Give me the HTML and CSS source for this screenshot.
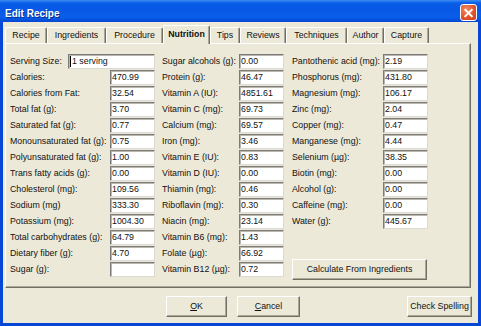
FILE: index.html
```html
<!DOCTYPE html>
<html>
<head>
<meta charset="utf-8">
<title>Edit Recipe</title>
<link rel="stylesheet" href="styles.css">
</head>
<body>
<div class="window">
  <div class="titlebar">
    <span class="title">Edit Recipe</span>
    <span class="close">
      <svg width="16" height="16" viewBox="0 0 16 16"><path d="M4.5 4.5 L11.5 11.5 M11.5 4.5 L4.5 11.5" stroke="#fff" stroke-width="2" stroke-linecap="square"/></svg>
    </span>
  </div>
  <div class="client">
    <div class="tabs">
      <div class="tab w-recipe">Recipe</div>
      <div class="tab w-ingr">Ingredients</div>
      <div class="tab w-proc">Procedure</div>
      <div class="tab w-nutr selected">Nutrition</div>
      <div class="tab w-tips">Tips</div>
      <div class="tab w-rev">Reviews</div>
      <div class="tab w-tech">Techniques</div>
      <div class="tab w-auth">Author</div>
      <div class="tab w-cap">Capture</div>
    </div>
    <div class="panel">
      <div class="col col1">
        <div class="row"><span class="label">Serving Size:</span><span class="field wide"><span class="caret"></span>1 serving</span></div>
        <div class="row"><span class="label">Calories:</span><span class="field">470.99</span></div>
        <div class="row"><span class="label">Calories from Fat:</span><span class="field">32.54</span></div>
        <div class="row"><span class="label">Total fat (g):</span><span class="field">3.70</span></div>
        <div class="row"><span class="label">Saturated fat (g):</span><span class="field">0.77</span></div>
        <div class="row"><span class="label">Monounsaturated fat (g):</span><span class="field">0.75</span></div>
        <div class="row"><span class="label">Polyunsaturated fat (g):</span><span class="field">1.00</span></div>
        <div class="row"><span class="label">Trans fatty acids (g):</span><span class="field">0.00</span></div>
        <div class="row"><span class="label">Cholesterol (mg):</span><span class="field">109.56</span></div>
        <div class="row"><span class="label">Sodium (mg)</span><span class="field">333.30</span></div>
        <div class="row"><span class="label">Potassium (mg):</span><span class="field">1004.30</span></div>
        <div class="row"><span class="label">Total carbohydrates (g):</span><span class="field">64.79</span></div>
        <div class="row"><span class="label">Dietary fiber (g):</span><span class="field">4.70</span></div>
        <div class="row"><span class="label">Sugar (g):</span><span class="field"></span></div>
      </div>
      <div class="col col2">
        <div class="row"><span class="label">Sugar alcohols (g):</span><span class="field">0.00</span></div>
        <div class="row"><span class="label">Protein (g):</span><span class="field">46.47</span></div>
        <div class="row"><span class="label">Vitamin A (IU):</span><span class="field">4851.61</span></div>
        <div class="row"><span class="label">Vitamin C (mg):</span><span class="field">69.73</span></div>
        <div class="row"><span class="label">Calcium (mg):</span><span class="field">69.57</span></div>
        <div class="row"><span class="label">Iron (mg):</span><span class="field">3.46</span></div>
        <div class="row"><span class="label">Vitamin E (IU):</span><span class="field">0.83</span></div>
        <div class="row"><span class="label">Vitamin D (IU):</span><span class="field">0.00</span></div>
        <div class="row"><span class="label">Thiamin (mg):</span><span class="field">0.46</span></div>
        <div class="row"><span class="label">Riboflavin (mg):</span><span class="field">0.30</span></div>
        <div class="row"><span class="label">Niacin (mg):</span><span class="field">23.14</span></div>
        <div class="row"><span class="label">Vitamin B6 (mg):</span><span class="field">1.43</span></div>
        <div class="row"><span class="label">Folate (µg):</span><span class="field">66.92</span></div>
        <div class="row"><span class="label">Vitamin B12 (µg):</span><span class="field">0.72</span></div>
      </div>
      <div class="col col3">
        <div class="row"><span class="label">Pantothenic acid (mg):</span><span class="field">2.19</span></div>
        <div class="row"><span class="label">Phosphorus (mg):</span><span class="field">431.80</span></div>
        <div class="row"><span class="label">Magnesium (mg):</span><span class="field">106.17</span></div>
        <div class="row"><span class="label">Zinc (mg):</span><span class="field">2.04</span></div>
        <div class="row"><span class="label">Copper (mg):</span><span class="field">0.47</span></div>
        <div class="row"><span class="label">Manganese (mg):</span><span class="field">4.44</span></div>
        <div class="row"><span class="label">Selenium (µg):</span><span class="field">38.35</span></div>
        <div class="row"><span class="label">Biotin (mg):</span><span class="field">0.00</span></div>
        <div class="row"><span class="label">Alcohol (g):</span><span class="field">0.00</span></div>
        <div class="row"><span class="label">Caffeine (mg):</span><span class="field">0.00</span></div>
        <div class="row"><span class="label">Water (g):</span><span class="field">445.67</span></div>
        <div class="button calc">Calculate From Ingredients</div>
      </div>
    </div>
    <div class="footer">
      <div class="button ok"><u>O</u>K</div>
      <div class="button cancel"><u>C</u>ancel</div>
      <div class="button spell">Check Spelling</div>
    </div>
  </div>
</div>
</body>
</html>
```

FILE: styles.css
```css
* { box-sizing: border-box; }
html, body { margin: 0; padding: 0; }
body {
  width: 481px;
  height: 326px;
  overflow: hidden;
  font-family: "Liberation Sans", Arial, sans-serif;
  font-size: 8.8px;
  color: #111;
}
.window {
  width: 481px;
  height: 326px;
  background: #0847d6;
  display: flex;
  flex-direction: column;
}
.titlebar {
  height: 22px;
  padding: 4px 0 0 5px;
  line-height: 19px;
  background: linear-gradient(to bottom, #3d8cf5 0px, #0a5de6 3px, #0758e6 10px, #0a5fea 17px, #0550dc 20px, #0846cf 22px);
  display: flex;
  position: relative;
}
.title {
  color: #fff;
  font-weight: bold;
  font-size: 10px;
  text-shadow: 1px 1px 0 #0a2b8a;
}
.close {
  position: absolute;
  left: 460px;
  top: 4px;
  width: 17px;
  height: 17px;
  border: 1px solid #fff;
  border-radius: 3px;
  background: radial-gradient(circle at 35% 30%, #f08a66 0%, #e2552c 55%, #c9401f 100%);
  display: flex;
  align-items: center;
  justify-content: center;
}
.client {
  flex: 1;
  margin: 0 3px 3px 3px;
  background: #ece9d8;
  display: flex;
  flex-direction: column;
}
.tabs {
  display: flex;
  align-items: flex-end;
  height: 19px;
  margin: 3px 0 -1px 2px;
  position: relative;
  z-index: 1;
}
.tab {
  height: 16px;
  margin-bottom: 1px;
  line-height: 15px;
  text-align: center;
  white-space: nowrap;
  background: #ece9d8;
  border-top: 1px solid #fff;
  border-left: 1px solid #fff;
  border-right: 1px solid #716f64;
  box-shadow: inset -1px 0 0 #aca899;
  border-radius: 2px 2px 0 0;
}
.tab.selected {
  height: 19px;
  margin-bottom: 0;
  line-height: 17px;
  font-weight: bold;
}
.w-recipe { width: 42px; }
.w-ingr { width: 59px; }
.w-proc { width: 57px; }
.w-nutr { width: 47px; }
.w-tips { width: 30px; }
.w-rev { width: 46px; }
.w-tech { width: 61px; }
.w-auth { width: 37px; }
.w-cap { width: 45px; }
.panel {
  height: 245px;
  margin: 0 7px 0 2px;
  border-top: 1px solid #fff;
  border-left: 1px solid #fff;
  border-right: 1px solid #716f64;
  border-bottom: 1px solid #716f64;
  box-shadow: inset -1px -1px 0 #aca899;
  padding: 10px 0 0 4px;
  display: flex;
}
.col {
  display: flex;
  flex-direction: column;
}
.col1 { width: 145px; margin-right: 7px; }
.col2 { width: 122px; margin-right: 8px; }
.col3 { width: 136px; }
.row {
  height: 15px;
  margin-bottom: 1px;
  display: flex;
  align-items: center;
  justify-content: space-between;
  white-space: nowrap;
}
.label {
  line-height: 15px;
}
.field {
  width: 45px;
  height: 15px;
  line-height: 13px;
  padding-left: 1px;
  background: #fff;
  border-top: 1px solid #7b7b7b;
  border-left: 1px solid #7b7b7b;
  border-right: 1px solid #dcdad0;
  border-bottom: 1px solid #dcdad0;
  box-shadow: inset 1px 1px 0 #b9b7ae;
  display: flex;
  align-items: center;
}
.field.wide { width: 87px; }
.caret {
  width: 1px;
  height: 11px;
  background: #000;
  margin-right: 1px;
}
.button {
  height: 21px;
  line-height: 19px;
  text-align: center;
  white-space: nowrap;
  background: #ece9d8;
  border-top: 1px solid #fff;
  border-left: 1px solid #fff;
  border-right: 1px solid #716f64;
  border-bottom: 1px solid #716f64;
  box-shadow: inset -1px -1px 0 #aca899;
}
.calc {
  margin-top: 29px;
  width: 135px;
}
.footer {
  display: flex;
  margin-top: 8px;
  padding-right: 6px;
}
.ok { width: 61px; margin-left: 163px; }
.cancel { width: 63px; margin-left: 10px; }
.spell { width: 65px; margin-left: auto; }
```
